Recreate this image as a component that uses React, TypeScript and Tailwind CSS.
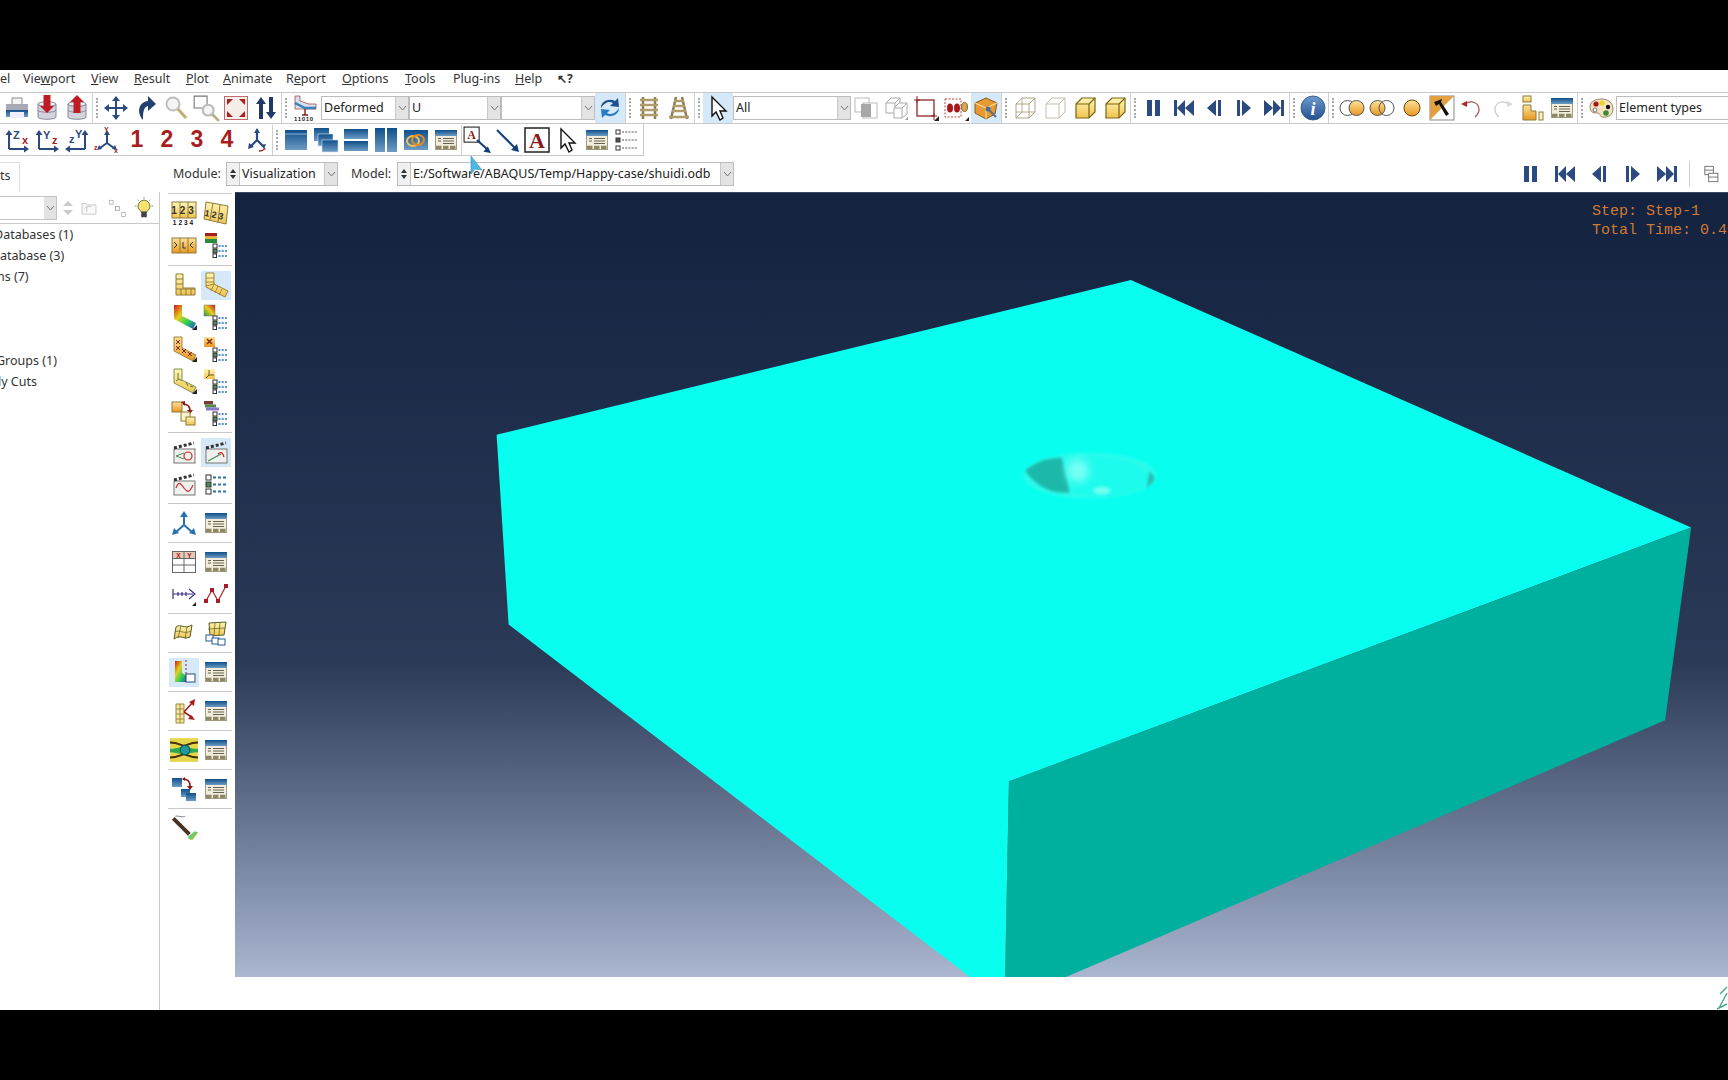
import type { ReactNode } from 'react';

const NAVY = '#2b4a7f';
const RED = '#a31d1d';

function S({ children, s = 26 }: { children: ReactNode; s?: number }) {
  return (
    <svg width={s} height={s} viewBox="0 0 26 26" fill="none">
      {children}
    </svg>
  );
}

function Btn({ children, on }: { children?: ReactNode; on?: boolean }) {
  return (
    <div className={`w-[30px] h-[30px] shrink-0 flex items-center justify-center ${on ? 'bg-[#d6e9f8]' : ''}`}>
      {children}
    </div>
  );
}

function Grip() {
  return (
    <div className="w-[9px] h-[30px] shrink-0 border-l border-[#d2d2d2] flex items-center pl-[3px]">
      <div className="h-[20px] border-l-2 border-dotted border-[#a9a9a9]" />
    </div>
  );
}

function Arrow({ dir = 'down' }: { dir?: string }) {
  return (
    <svg width="9" height="6" viewBox="0 0 9 6" fill="none" className={dir === 'up' ? 'rotate-180' : ''}>
      <path d="M1 1l3.5 4L8 1" stroke="#777" strokeWidth="1" />
    </svg>
  );
}

function Combo({ w, text, spin, plain }: { w: string; text?: string; spin?: boolean; plain?: boolean }) {
  return (
    <div className={`${w} h-[24px] shrink-0 flex items-stretch border border-[#bcbcbc] bg-white`}>
      {spin && (
        <div className="w-[13px] shrink-0 border-r border-[#c4c4c4] bg-[#f0f0f0] flex flex-col items-center justify-center gap-[2px]">
          <div className="w-0 h-0 border-x-[3px] border-x-transparent border-b-[4px] border-b-[#333]" />
          <div className="w-0 h-0 border-x-[3px] border-x-transparent border-t-[4px] border-t-[#333]" />
        </div>
      )}
      <div className="flex-1 px-[2px] text-[12.5px] leading-[21px] text-[#222] whitespace-nowrap overflow-hidden">{text}</div>
      {!plain && (
        <div className="w-[13px] shrink-0 bg-[#e3e3e3] border-l border-[#c8c8c8] flex items-center justify-center">
          <Arrow />
        </div>
      )}
    </div>
  );
}

/* ---- icon drawings ---- */
const Win = () => (
  <S>
    <rect x="2.5" y="3.5" width="21" height="19" fill="#f1ecdd" stroke="#a49d80" />
    <rect x="2" y="3" width="22" height="6" fill="url(#gb)" />
    <path d="M5 11.5h3M5 14h3M10 11.5h11M10 14h11M10 16.5h11" stroke="#66634f" />
    <path d="M3 20.5h20" stroke="#8f8866" strokeWidth="3.5" strokeDasharray="5.5 1.5" />
  </S>
);

const Dots = ({ big }: { big?: boolean }) => (
  <g>
    <rect x={big ? 3 : 10} y={big ? 4 : 12} width={big ? 5 : 4} height={big ? 5 : 4} fill="#fff" stroke="#333" />
    <rect x={big ? 3 : 10} y={big ? 11 : 17} width={big ? 5 : 4} height={big ? 5 : 4} fill="#4f8a4f" stroke="#333" />
    <rect x={big ? 3 : 10} y={big ? 18 : 22} width={big ? 5 : 3.5} height={big ? 5 : 3.5} fill="#fff" stroke="#333" />
    <path
      d={big ? 'M10 6.5h14M10 13.5h14M10 20.5h14' : 'M15.5 14h9M15.5 19h9M15.5 24h9'}
      stroke="#2f6ea5"
      strokeWidth={big ? 2 : 1.5}
      strokeDasharray={big ? '3 2' : '2 1.2'}
    />
  </g>
);

const Triad = ({ a, b, c }: { a: string; b: string; c?: string }) => (
  <S>
    <path d="M5 22V7M5 22h17" stroke={NAVY} strokeWidth="2" />
    <path d="M5 3l3.5 5h-7zM25 22l-5-3.5v7z" fill={NAVY} />
    <text x="9" y="12" fontSize="11" fontWeight="700" fill={c || NAVY} fontFamily="Liberation Sans, sans-serif">{a}</text>
    <text x="18" y="17" fontSize="11" fontWeight="700" fill={RED} fontFamily="Liberation Sans, sans-serif">{b}</text>
  </S>
);

const Num = ({ n }: { n: string }) => (
  <span className="text-[23px] font-bold leading-none text-[#a81e1e] font-['Liberation_Sans',sans-serif]">{n}</span>
);

const Cube = ({ fill, line, wire }: { fill?: boolean; line: string; wire?: boolean }) => (
  <S>
    <path d="M4 9l6-6h13v14l-6 6H4z" fill={fill ? 'url(#gy)' : '#fff'} stroke={line} strokeWidth={fill ? 1.2 : 0.9} />
    <path d="M4 9h13v14M17 9l6-6" stroke={line} strokeWidth={fill ? 1.2 : 0.9} />
    {wire && <path d="M10 3v14H4M10 17h13M10 17l-6 6" stroke={line} strokeWidth="0.8" />}
  </S>
);

const Cyl = ({ up }: { up?: boolean }) => (
  <S>
    <path d="M4 9v13c0 3 18 3 18 0V9z" fill="#d3d3e0" stroke="#8a8a9a" />
    <path d="M4 15c0 3 18 3 18 0M4 9c0 3 18 3 18 0" stroke="#8a8a9a" fill="none" />
    <path d="M4 9c0-3 18-3 18 0s-18 3-18 0z" fill="#eceef4" stroke="#8a8a9a" />
    <path
      d={up ? 'M13 0l7 7h-3.5v11h-7V7H6z' : 'M9.5 0h7v11H20l-7 7-7-7h3.5z'}
      fill="#bd1c22"
    />
  </S>
);

const Bent = ({ fill, stroke = '#8a6a1a' }: { fill: string; stroke?: string }) => (
  <path d="M3 1h8v11l14 7-3 6L3 15z" fill={fill} stroke={stroke} strokeWidth="0.8" />
);

const Clap = ({ children }: { children: ReactNode }) => (
  <S>
    <rect x="3" y="10" width="21" height="14" fill="#eef1ee" stroke="#777" />
    <path d="M3 9l20-5" stroke="#333" strokeWidth="3" strokeDasharray="3 2" />
    {children}
  </S>
);

const PLAY = {
  pause: 'M6 5h5v16H6zM14 5h5v16h-5z',
  first: 'M3 5h3v16H3zM14 5v16L6 13zM23 5v16l-9-8z',
  prev: 'M15 5v16L6 13zM17 5h3v16h-3z',
  next: 'M11 5v16l9-8zM6 5h3v16H6z',
  last: 'M3 5v16l9-8zM12 5v16l8-8zM20 5h3v16h-3z',
};
const Play = ({ d }: { d: string }) => (
  <S>
    <path d={d} fill={NAVY} />
  </S>
);

const ListSmall = ({ children }: { children: ReactNode }) => (
  <S>
    {children}
    <Dots />
  </S>
);

const Venn = ({ mode }: { mode: number }) => (
  <S>
    {mode < 2 && (
      <g>
        <circle cx="8.5" cy="13" r="7.5" fill={mode === 1 ? 'url(#go)' : '#fff'} stroke="#555" />
        <circle cx="17.5" cy="13" r="7.5" fill={mode === 0 ? 'url(#go)' : 'none'} stroke="#555" />
      </g>
    )}
    {mode === 2 && <circle cx="13" cy="13" r="8" fill="url(#go)" stroke="#6b4a14" />}
  </S>
);

function Row1() {
  return (
    <div className="h-[32px] border-y border-[#c9c9c9] bg-white flex items-center pl-[2px]">
      <Btn>
        <S>
          <path d="M8 3h10v7H8z" fill="#f4f4f4" stroke="#8a8a8a" />
          <rect x="2" y="9" width="22" height="8" fill="#a9a9b5" />
          <rect x="2" y="15" width="22" height="7" fill="url(#gb)" />
          <path d="M6 17h14v6H6z" fill="#eef" />
        </S>
      </Btn>
      <Btn><Cyl /></Btn>
      <Btn><Cyl up /></Btn>
      <Grip />
      <Btn>
        <S>
          <path d="M13 1l4 5h-3v6h6V9l5 4-5 4v-3h-6v6h3l-4 5-4-5h3v-6H6v3l-5-4 5-4v3h6V6H9z" fill={NAVY} />
        </S>
      </Btn>
      <Btn>
        <S>
          <path d="M10 25C3 17 6 7 15 6V1l8 8-8 7v-5c-5 1-5 8-5 14z" fill="#23406f" />
        </S>
      </Btn>
      <Btn>
        <S>
          <circle cx="10" cy="9" r="6.5" fill="#f5f5f5" stroke="#bdbdbd" strokeWidth="2" />
          <path d="M15 14l8 9" stroke="#c2ad75" strokeWidth="3" />
        </S>
      </Btn>
      <Btn>
        <S s={28}>
          <path d="M2 2h12v11H2z" fill="#fff" stroke="#777" />
          <circle cx="15" cy="15" r="5" fill="#f5f5f5" stroke="#bbb" strokeWidth="2" />
          <path d="M19 19l6 6" stroke="#b9ab82" strokeWidth="2.5" />
        </S>
      </Btn>
      <Btn>
        <S>
          <rect x="1.5" y="1.5" width="23" height="23" fill="#f6efe9" stroke="#bd6a6a" strokeWidth="1" />
          <path d="M4 4h6L4 10zM22 4v6l-6-6zM4 22v-6l6 6zM22 22h-6l6-6z" fill="#b01f1f" />
        </S>
      </Btn>
      <Btn>
        <S>
          <path d="M8 2l5 7h-3v15H6V9H3zM18 24l-5-7h3V2h4v15h3z" fill="#1f3a68" />
        </S>
      </Btn>
      <Grip />
      <Btn>
        <S>
          <path d="M3 1h5v5l9 3h7v5H3z" fill="#d7e0ee" stroke="#9c3b3b" strokeWidth="0.7" />
          <path d="M3 8l10 5h11" stroke="#3c7fb5" strokeWidth="2.5" />
          <path d="M13 14v6M10 20h6" stroke="#8a1c1c" strokeWidth="1.4" />
          <text x="2" y="26" fontSize="6" fontWeight="700" fill="#222" letterSpacing="0.7" fontFamily="Liberation Sans, sans-serif">11010</text>
        </S>
      </Btn>
      <div className="w-px shrink-0" />
      <Combo w="w-[88px]" text="Deformed" />
      <Combo w="w-[92px]" text="U" />
      <Combo w="w-[94px]" />
      <Btn on>
        <S>
          <path d="M4 13C4 6 12 3 18 6l3-3 1 9-9-1 3-3c-4-2-8-1-12 5z" fill="#1f4f93" />
          <path d="M22 13c0 7-8 10-14 7l-3 3-1-9 9 1-3 3c4 2 8 1 12-5z" fill="#2a7cc0" />
        </S>
      </Btn>
      <Grip />
      <Btn>
        <S>
          <path d="M7 2v22M19 2v22" stroke="#8a7a55" strokeWidth="2.5" />
          <path d="M4 5h18M4 10h18M4 15h18M4 20h18" stroke="#b09b6b" strokeWidth="2.5" />
        </S>
      </Btn>
      <Btn>
        <S>
          <path d="M10 2L5 24M16 2l5 22" stroke="#8a7a55" strokeWidth="2.5" />
          <path d="M8 6h10M7 11h12M6 16h14M3 22h20" stroke="#b09b6b" strokeWidth="2.5" />
        </S>
      </Btn>
      <Grip />
      <Btn on>
        <S>
          <path d="M7 2l14 14h-6l3 7-3 2-4-8-4 4z" fill="#fff" stroke="#111" strokeWidth="1.4" />
        </S>
      </Btn>
      <Combo w="w-[118px]" text="All" />
      <Btn>
        <S>
          <rect x="2" y="3" width="14" height="14" fill="#fff" stroke="#bbb" />
          <rect x="10" y="8" width="14" height="15" fill="#fff" stroke="#bbb" />
          <rect x="8" y="9" width="10" height="13" fill="#a8a8a8" />
        </S>
      </Btn>
      <Btn>
        <S>
          <path d="M3 8l5-5h9l-5 5zM3 8v10h9V8M12 8l5-5v10" stroke="#aaa" fill="#fff" />
          <path d="M11 13l5-5h8v11l-5 4h-8z" fill="#fff" stroke="#aaa" />
          <path d="M11 13h8v10M19 13l5-5" stroke="#aaa" />
          <path d="M25 25h-3l3-3z" fill="#999" />
        </S>
      </Btn>
      <Btn>
        <S>
          <rect x="4" y="5" width="17" height="16" stroke="#8f2525" strokeWidth="1.3" />
          <path d="M4 1v7M1 5h6M21 18v7M18 21h6" stroke="#8f2525" />
          <path d="M26 26h-5l5-5z" fill="#222" />
        </S>
      </Btn>
      <Btn>
        <S>
          <rect x="2" y="4" width="16" height="18" stroke="#b44" strokeDasharray="2 1.5" />
          <ellipse cx="7" cy="13" rx="3" ry="4.5" fill="#a9181c" />
          <ellipse cx="14" cy="13" rx="3" ry="4.5" fill="#a9181c" />
          <ellipse cx="21.5" cy="12" rx="3" ry="4.5" fill="#d8a555" stroke="#8b6b2a" />
          <path d="M26 26h-4l4-4z" fill="#222" />
        </S>
      </Btn>
      <Btn on>
        <S>
          <path d="M13 3l11 5-2 11-9 5-11-6V8z" fill="#e79a33" stroke="#8a5a16" />
          <path d="M2 8l11 5 11-5M13 13v11" stroke="#fde5b0" />
          <path d="M15 14l8 8" stroke="#56728f" strokeWidth="2.2" />
          <circle cx="15" cy="14" r="2.5" fill="#4d6f92" />
        </S>
      </Btn>
      <Grip />
      <Btn><Cube line="#a9987a" wire /></Btn>
      <Btn><Cube line="#bdb6a4" /></Btn>
      <Btn><Cube fill line="#7a6412" /></Btn>
      <Btn><Cube fill line="#7a6412" /></Btn>
      <Grip />
      <Btn><Play d={PLAY.pause} /></Btn>
      <Btn><Play d={PLAY.first} /></Btn>
      <Btn><Play d={PLAY.prev} /></Btn>
      <Btn><Play d={PLAY.next} /></Btn>
      <Btn><Play d={PLAY.last} /></Btn>
      <Grip />
      <Btn>
        <S>
          <circle cx="13" cy="13" r="12" fill="url(#gi)" stroke="#33608f" />
          <text x="13" y="20" fontSize="18" fontWeight="700" fontStyle="italic" textAnchor="middle" fill="#fff" fontFamily="Liberation Serif, serif">i</text>
        </S>
      </Btn>
      <Grip />
      <Btn><Venn mode={0} /></Btn>
      <Btn><Venn mode={1} /></Btn>
      <Btn><Venn mode={2} /></Btn>
      <Btn>
        <S>
          <rect x="1" y="1" width="24" height="24" fill="#fff" stroke="#888" />
          <path d="M1 1h24L1 25z" fill="#e2a043" />
          <path d="M5 7l8-3-1 3 8 12-3 2-7-12-3 2z" fill="#111" />
        </S>
      </Btn>
      <Btn>
        <S>
          <path d="M6 9c6-4 14-2 14 6 0 3-2 5-4 7" stroke="#a55" strokeWidth="1.3" />
          <path d="M2 9l6-3v6z" fill="#b02a2a" />
        </S>
      </Btn>
      <Btn>
        <S>
          <path d="M20 9c-6-4-14-2-14 6 0 3 2 5 4 7" stroke="#ccc" strokeWidth="1.3" />
          <path d="M24 9l-6-3v6z" fill="#d6d6d6" />
        </S>
      </Btn>
      <Btn>
        <S>
          <rect x="4" y="1" width="8" height="6" fill="url(#gy)" stroke="#8d7a3a" />
          <path d="M4 10h8v6h5v9H4z" fill="url(#go)" stroke="#8d7a3a" />
          <rect x="20" y="17" width="4" height="8" fill="#fff3c4" stroke="#8d7a3a" />
        </S>
      </Btn>
      <Btn><Win /></Btn>
      <Grip />
      <Btn>
        <S>
          <path d="M2 12C2 6 8 4 14 4s11 4 11 10-5 9-11 8c-3-1-1-4-5-4s-7-1-7-6z" fill="#f5e3c3" stroke="#9a8460" />
          <circle cx="8" cy="9" r="2.6" fill="#a51616" />
          <circle cx="14" cy="8" r="2.6" fill="#e8d527" />
          <circle cx="20" cy="12" r="2.2" fill="#111" />
          <circle cx="18" cy="18" r="2.8" fill="#3c8a35" />
          <circle cx="7" cy="15" r="2" fill="#fff" stroke="#777" />
        </S>
      </Btn>
      <Combo w="w-[120px]" text="Element types" plain />
    </div>
  );
}

function Row2() {
  const Win2 = (
    <S>
      <rect x="2" y="3" width="22" height="20" fill="url(#gb)" />
      <path d="M2 7h22" stroke="#b5d3ea" strokeWidth="0.7" />
    </S>
  );
  return (
    <div className="h-[32px] w-[644px] border-b border-r border-[#c9c9c9] bg-white flex items-center pl-[2px]">
      <Btn><Triad a="Z" b="x" /></Btn>
      <Btn><Triad a="Y" b="z" /></Btn>
      <Btn>
        <S>
          <path d="M21 22V7M21 22H4" stroke={NAVY} strokeWidth="2" />
          <path d="M21 3l3.5 5h-7zM1 22l5-3.5v7z" fill={NAVY} />
          <text x="5" y="16" fontSize="11" fontWeight="700" fill={NAVY} fontFamily="Liberation Sans, sans-serif">z</text>
          <text x="11" y="11" fontSize="11" fontWeight="700" fill={NAVY} fontFamily="Liberation Sans, sans-serif">Y</text>
        </S>
      </Btn>
      <Btn>
        <S>
          <path d="M13 16V6M13 16l-7 5M13 16l7 5" stroke={NAVY} strokeWidth="2" />
          <path d="M13 3l3 5h-6zM3 23l2-5 3 4zM23 23l-5-1 3-4z" fill={NAVY} />
          <text x="10" y="5" fontSize="7" fontWeight="700" fill={RED} fontFamily="Liberation Sans, sans-serif">Y</text>
          <text x="0" y="23" fontSize="7" fontWeight="700" fill={RED} fontFamily="Liberation Sans, sans-serif">z</text>
          <text x="20" y="26" fontSize="7" fontWeight="700" fill={RED} fontFamily="Liberation Sans, sans-serif">x</text>
        </S>
      </Btn>
      <Btn><Num n="1" /></Btn>
      <Btn><Num n="2" /></Btn>
      <Btn><Num n="3" /></Btn>
      <Btn><Num n="4" /></Btn>
      <Btn>
        <S>
          <path d="M13 13V5M13 13l-6 6M13 13l6 6" stroke={NAVY} strokeWidth="2.2" />
          <path d="M13 1l3 5h-6zM4 22l1-6 5 4zM22 17l-5 1 3 4z" fill={NAVY} />
          <path d="M15 24c3 0 5-1 6-3" stroke="#b02020" strokeWidth="1.5" />
        </S>
      </Btn>
      <Grip />
      <Btn>{Win2}</Btn>
      <Btn>
        <S>
          <rect x="1" y="1" width="15" height="13" fill="url(#gb)" />
          <rect x="5" y="7" width="15" height="12" fill="url(#gb)" stroke="#cfe1ef" strokeWidth="0.6" />
          <rect x="9" y="13" width="16" height="12" fill="url(#gb)" stroke="#cfe1ef" strokeWidth="0.6" />
        </S>
      </Btn>
      <Btn>
        <S>
          <rect x="1" y="2" width="24" height="10" fill="url(#gb)" />
          <rect x="1" y="14" width="24" height="10" fill="url(#gb)" />
        </S>
      </Btn>
      <Btn>
        <S>
          <rect x="2" y="1" width="10" height="24" fill="url(#gb)" />
          <rect x="14" y="1" width="10" height="24" fill="url(#gb)" />
        </S>
      </Btn>
      <Btn>
        <S>
          <rect x="1" y="3" width="24" height="20" fill="url(#gb)" />
          <ellipse cx="10" cy="14" rx="6" ry="5" stroke="#f2c14e" strokeWidth="2" />
          <ellipse cx="15" cy="13" rx="6" ry="5" stroke="#e58a1e" strokeWidth="2" />
        </S>
      </Btn>
      <Btn><Win /></Btn>
      <div className="w-px h-[30px] shrink-0 bg-[#d2d2d2]" />
      <Btn>
        <S s={28}>
          <rect x="1" y="1" width="14" height="14" fill="#fff" stroke="#222" />
          <text x="8" y="12" fontSize="11" fontWeight="700" textAnchor="middle" fill="#8c1a1a" fontFamily="Liberation Serif, serif">A</text>
          <path d="M13 13l10 9" stroke="#123f7a" strokeWidth="2" />
          <path d="M26 25l-7-1 4-5z" fill="#123f7a" />
        </S>
      </Btn>
      <Btn>
        <S>
          <path d="M3 3l18 18" stroke="#123f7a" strokeWidth="2" />
          <path d="M25 25l-8-2 6-6z" fill="#123f7a" />
        </S>
      </Btn>
      <Btn>
        <S>
          <rect x="1" y="1" width="24" height="24" fill="#fff" stroke="#222" strokeWidth="1.5" />
          <text x="13" y="21" fontSize="22" fontWeight="700" textAnchor="middle" fill="#8c1a1a" fontFamily="Liberation Serif, serif">A</text>
        </S>
      </Btn>
      <Btn>
        <S>
          <path d="M7 2l14 14h-6l3 7-3 2-4-8-4 4z" fill="#fff" stroke="#111" strokeWidth="1.4" />
        </S>
      </Btn>
      <Btn><Win /></Btn>
      <Btn>
        <S>
          <rect x="2" y="3" width="4" height="4" fill="#fff" stroke="#333" />
          <rect x="2" y="11" width="4" height="4" fill="#555" stroke="#333" />
          <rect x="2" y="19" width="4" height="4" fill="#fff" stroke="#333" />
          <path d="M8 5h16M8 13h16M8 21h16" stroke="#555" strokeDasharray="2 1.2" />
        </S>
      </Btn>
    </div>
  );
}

function Row3() {
  return (
    <div className="h-[36px] flex items-center text-[12.5px] text-[#333]">
      <div className="w-[20px] h-[30px] self-end shrink-0 border-r border-t border-[#dedede] leading-[26px] whitespace-nowrap">ts</div>
      <span className="ml-[153px] w-[53px] shrink-0 pt-px">Module:</span>
      <Combo w="w-[112px]" text="Visualization" spin />
      <span className="ml-[13px] w-[46px] shrink-0 pt-px">Model:</span>
      <Combo w="w-[337px]" text="E:/Software/ABAQUS/Temp/Happy-case/shuidi.odb" spin />
      <div className="ml-auto flex items-center">
        <div className="w-[34px] flex justify-center"><Play d={PLAY.pause} /></div>
        <div className="w-[34px] flex justify-center"><Play d={PLAY.first} /></div>
        <div className="w-[34px] flex justify-center"><Play d={PLAY.prev} /></div>
        <div className="w-[34px] flex justify-center"><Play d={PLAY.next} /></div>
        <div className="w-[34px] flex justify-center"><Play d={PLAY.last} /></div>
        <div className="ml-[5px] mr-[8px] w-px h-[26px] bg-[#cfcfcf]" />
        <div className="w-[26px] flex justify-center mr-[4px]">
          <S s={20}>
            <rect x="5" y="3" width="11" height="11" fill="#fff" stroke="#555" />
            <path d="M5 8h11" stroke="#555" />
            <rect x="10" y="12" width="12" height="11" fill="#fff" stroke="#555" />
            <path d="M10 17h12" stroke="#555" />
          </S>
        </div>
      </div>
    </div>
  );
}

function TreePanel() {
  return (
    <div className="w-[160px] shrink-0 overflow-hidden border-r border-[#c9c9c9] bg-white">
      <div className="h-[32px] border-b border-[#c9c9c9] flex items-center pr-[3px]">
        <div className="w-[57px] h-[24px] border border-[#c4c4c4] border-l-0 flex justify-end shrink-0">
          <div className="w-[12px] bg-[#e3e3e3] flex items-center justify-center"><Arrow /></div>
        </div>
        <div className="ml-[6px] flex flex-col gap-[4px] shrink-0">
          <div className="w-0 h-0 border-x-[5px] border-x-transparent border-b-[5px] border-b-[#c9c9c9]" />
          <div className="w-0 h-0 border-x-[5px] border-x-transparent border-t-[5px] border-t-[#c9c9c9]" />
        </div>
        <div className="ml-[6px]">
          <S s={20}>
            <path d="M4 7h5l2 2h11v12H4z" fill="#fafafa" stroke="#bbb" />
            <path d="M10 18v-7m0 0l-3 3m3-3h6" stroke="#bbb" />
          </S>
        </div>
        <div className="ml-[8px]">
          <S s={20}>
            <rect x="3" y="3" width="5" height="5" stroke="#aaa" />
            <rect x="11" y="11" width="5" height="5" stroke="#999" />
            <rect x="19" y="19" width="5" height="5" stroke="#aaa" />
          </S>
        </div>
        <div className="ml-auto">
          <S s={24}>
            <circle cx="13" cy="11" r="6.5" fill="#f5e26a" stroke="#6a6a4a" />
            <rect x="10" y="17" width="6" height="6" fill="#444" />
            <path d="M13 1v2M3 11h2M21 11h2M6 4l1.5 1.5M20 4l-1.5 1.5" stroke="#8a8a6a" />
          </S>
        </div>
      </div>
      {/* rows are scrolled sideways, so their first letters are cut by the panel edge */}
      <div className="text-[12.5px] text-[#333]">
        <div className="h-[21px] leading-[21px] whitespace-nowrap -ml-[6px]">Databases (1)</div>
        <div className="h-[21px] leading-[21px] whitespace-nowrap">atabase (3)</div>
        <div className="h-[21px] leading-[21px] whitespace-nowrap -ml-[3px]">ns (7)</div>
        <div className="h-[63px]" />
        <div className="h-[21px] leading-[21px] whitespace-nowrap -ml-[4px]">Groups (1)</div>
        <div className="h-[21px] leading-[21px] whitespace-nowrap -ml-[2px]">ly Cuts</div>
      </div>
    </div>
  );
}

const Cell = ({ children, on }: { children?: ReactNode; on?: boolean }) => (
  <div className="w-[32px] h-[32px] flex items-center justify-center">
    <div className={`w-[30px] h-[29px] flex items-center justify-center ${on ? 'bg-[#d6e9f8]' : ''}`}>{children}</div>
  </div>
);

const Grp = ({ children }: { children: ReactNode }) => (
  <div className="w-[64px] ml-[8px] border-t border-[#c9c9c9] py-[3px] grid grid-cols-2">{children}</div>
);

const txt = 'Liberation Sans, sans-serif';

function ToolBox() {
  return (
    <div className="w-[75px] shrink-0 pt-[1px] bg-white">
      <Grp>
        <Cell>
          <S>
            <rect x="1" y="2" width="24" height="16" fill="url(#gy)" stroke="#8d7a3a" />
            <path d="M9 2v16M17 2v16" stroke="#8d7a3a" />
            <text x="13" y="14" fontSize="10" fontWeight="700" textAnchor="middle" letterSpacing="3" fill="#333" fontFamily={txt}>123</text>
            <text x="13" y="25" fontSize="6.5" fontWeight="700" textAnchor="middle" letterSpacing="2" fill="#111" fontFamily={txt}>1234</text>
          </S>
        </Cell>
        <Cell>
          <S>
            <path d="M3 2l22 4-2 18L1 19z" fill="url(#gy)" stroke="#8d7a3a" />
            <path d="M10 3l-3 17M17 5l-2 17" stroke="#8d7a3a" />
            <text x="12" y="18" fontSize="9" fontWeight="700" textAnchor="middle" letterSpacing="2" fill="#333" fontFamily={txt} transform="rotate(12 12 15)">123</text>
          </S>
        </Cell>
        <Cell>
          <S>
            <rect x="1" y="6" width="24" height="15" fill="url(#go)" stroke="#8d7a3a" />
            <path d="M9 6v15M17 6v15" stroke="#8d7a3a" />
            <path d="M3 10l3 3-3 3M12 10v6h3M22 10l-3 3 3 3" stroke="#333" />
          </S>
        </Cell>
        <Cell>
          <ListSmall>
            <rect x="2" y="1" width="12" height="4" fill="#a51d1d" />
            <rect x="2" y="4" width="12" height="4" fill="#e7b53a" />
            <rect x="2" y="7" width="12" height="4" fill="#2a8a3d" />
          </ListSmall>
        </Cell>
      </Grp>
      <div className="h-px" />
      <Grp>
        <Cell>
          <S>
            <path d="M5 2h7v14h12v7H5z" fill="url(#gy)" stroke="#8d7a3a" />
            <path d="M5 7h7M5 12h7M5 17h19M10 17v6M15 17v6M20 17v6" stroke="#8d7a3a" />
          </S>
        </Cell>
        <Cell on>
          <S>
            <Bent fill="url(#gy)" />
            <path d="M3 6h8M3 10h8M3 14l8-2M11 12l-3 7M15 14l-3 7M19 17l-3 6" stroke="#8a6a1a" strokeWidth="0.7" />
          </S>
        </Cell>
        <Cell>
          <S>
            <Bent fill="url(#gc)" stroke="none" />
            <path d="M26 26h-5l5-5z" fill="#222" />
          </S>
        </Cell>
        <Cell>
          <ListSmall>
            <rect x="1" y="1" width="11" height="11" fill="url(#gc2)" stroke="#777" strokeWidth="0.5" />
          </ListSmall>
        </Cell>
        <Cell>
          <S>
            <Bent fill="url(#go)" />
            <path d="M5 4l4 4M9 4L5 8M5 10l4 4M9 10l-4 4M11 13l4 4M15 13l-4 4M17 16l4 4M21 16l-4 4" stroke="#7b2a10" strokeWidth="1" />
            <path d="M26 26h-5l5-5z" fill="#222" />
          </S>
        </Cell>
        <Cell>
          <ListSmall>
            <rect x="1" y="1" width="11" height="10" fill="url(#go)" />
            <path d="M4 3l5 5M9 3L4 8" stroke="#8a2c0c" strokeWidth="1.6" />
          </ListSmall>
        </Cell>
        <Cell>
          <S>
            <Bent fill="url(#gy)" stroke="#5d7a3a" />
            <path d="M7 5v6M5 13l3-2 3 2M15 14l2 4M19 18l3 1" stroke="#5d7a3a" />
            <path d="M26 26h-5l5-5z" fill="#222" />
          </S>
        </Cell>
        <Cell>
          <ListSmall>
            <rect x="1" y="1" width="11" height="10" fill="url(#gy)" />
            <path d="M6 2v5l-3 3M6 7h5" stroke="#6a5a1a" />
          </ListSmall>
        </Cell>
        <Cell>
          <S>
            <rect x="1" y="2" width="10" height="10" fill="url(#go)" stroke="#8d7a3a" />
            <path d="M12 4c5 0 7 3 7 7" stroke="#8c1a1a" strokeWidth="1.6" />
            <path d="M19 14l-3-4h6zM10 2L14 1v5z" fill="#8c1a1a" />
            <rect x="10" y="12" width="9" height="9" fill="#fff2c4" stroke="#8d7a3a" />
            <rect x="15" y="17" width="9" height="8" fill="url(#gy)" stroke="#8d7a3a" />
          </S>
        </Cell>
        <Cell>
          <ListSmall>
            <rect x="1" y="1" width="9" height="3.5" fill="#7a3a3a" />
            <rect x="2" y="4.5" width="11" height="3" fill="#4f8a4f" />
            <rect x="3" y="7.5" width="13" height="3" fill="#8b79c9" />
          </ListSmall>
        </Cell>
      </Grp>
      <Grp>
        <Cell>
          <Clap>
            <path d="M5 17l8-3M5 17l8 3" stroke="#4a8a5a" />
            <circle cx="17" cy="17" r="4" stroke="#c22" strokeWidth="1.2" />
          </Clap>
        </Cell>
        <Cell on>
          <Clap>
            <path d="M5 22l13-7" stroke="#4a8a5a" strokeWidth="1.3" />
            <path d="M15 15c3-3 5-1 6 3" stroke="#c22" strokeWidth="1.2" />
          </Clap>
        </Cell>
        <Cell>
          <Clap>
            <path d="M5 17c3-8 5-4 8 0s5 6 9-3" stroke="#c33" strokeWidth="1.2" />
          </Clap>
        </Cell>
        <Cell><S><Dots big /></S></Cell>
      </Grp>
      <Grp>
        <Cell>
          <S>
            <path d="M13 15V6M13 15l-8 7M13 15l8 7" stroke="#2872b0" strokeWidth="2" />
            <path d="M13 1l4 6H9zM1 25l2-7 5 5zM25 25l-7-2 5-5z" fill="#2872b0" />
          </S>
        </Cell>
        <Cell><Win /></Cell>
      </Grp>
      <Grp>
        <Cell>
          <S>
            <rect x="1.5" y="2.5" width="23" height="21" fill="#fff" stroke="#666" />
            <rect x="2" y="3" width="22" height="6" fill="#e7c9b8" />
            <path d="M2 9.5h22M2 16h22M13 3v20" stroke="#666" />
            <text x="7.5" y="8.5" fontSize="6.5" fontWeight="700" textAnchor="middle" fill="#a51616" fontFamily={txt}>X</text>
            <text x="18.5" y="8.5" fontSize="6.5" fontWeight="700" textAnchor="middle" fill="#a51616" fontFamily={txt}>Y</text>
          </S>
        </Cell>
        <Cell><Win /></Cell>
        <Cell>
          <S>
            <path d="M2 8v10M2 13h20M7 11v4M11 11v4M15 11v4" stroke="#3a2f8a" strokeWidth="1.2" />
            <path d="M18 8l6 5-6 5" stroke="#3a2f8a" strokeWidth="1.2" />
            <path d="M25 25h-4l4-4z" fill="#222" />
          </S>
        </Cell>
        <Cell>
          <S>
            <path d="M3 20l6-11 6 11 8-15" stroke="#b42a2a" strokeWidth="1.3" />
            <path d="M1 18h4v4H1zM7 7h4v4H7zM13 18h4v4h-4zM21 3h4v4h-4z" fill="#a81c2a" />
          </S>
        </Cell>
      </Grp>
      <Grp>
        <Cell>
          <S>
            <path d="M5 7c5-4 8 3 16-2l-2 12c-6 3-9-3-16 2z" fill="url(#gy)" stroke="#5a5a2a" />
            <path d="M10 6l-3 12M16 7l-2 12M4 12c5-3 9 3 16-1" stroke="#6a6a2a" strokeWidth="0.8" />
          </S>
        </Cell>
        <Cell>
          <S>
            <path d="M6 3l17-1-2 13-14 1z" fill="url(#gy)" stroke="#5a5a2a" />
            <path d="M12 3l-1 13M17 2l-1 13M5 9l17-1" stroke="#6a6a2a" strokeWidth="0.8" />
            <rect x="3" y="15" width="7" height="6" fill="#fff" stroke="#2a5a8f" />
            <rect x="9" y="18" width="7" height="6" fill="#fff" stroke="#2a5a8f" />
            <rect x="15" y="19" width="7" height="6" fill="#fff" stroke="#2a5a8f" />
          </S>
        </Cell>
      </Grp>
      <Grp>
        <Cell on>
          <S>
            <path d="M4 2h7v12l5 3v6H4z" fill="url(#gc)" />
            <path d="M15 1v24" stroke="#a51d1d" strokeDasharray="2 2" />
            <rect x="15" y="15" width="9" height="8" fill="#fff" stroke="#2a4a7f" />
          </S>
        </Cell>
        <Cell><Win /></Cell>
      </Grp>
      <Grp>
        <Cell>
          <S>
            <path d="M5 6h8v19H5zM5 11h8M5 16h8M5 21h8M9 6v19" stroke="#9a8a3a" fill="#f7e7a5" />
            <path d="M13 14l9-10M13 14l9 6" stroke="#a51d1d" strokeWidth="1.6" />
            <path d="M24 1l-1 7-5-4zM24 22l-7-1 3-4z" fill="#a51d1d" />
          </S>
        </Cell>
        <Cell><Win /></Cell>
      </Grp>
      <Grp>
        <Cell>
          <S s={28}>
            <rect x="0" y="2" width="26" height="22" fill="#e6d64a" />
            <path d="M0 6c8 0 10 3 13 3s5-3 13-3M0 20c8 0 10-3 13-3s5 3 13 3" stroke="#4a2d12" strokeWidth="1.8" />
            <path d="M0 12c5 0 5-1 13-2 6 1 8 2 13 2v3c-5 0-7 1-13 2-8-1-8-2-13-2z" fill="#2fa84f" />
            <circle cx="14" cy="13" r="4.5" fill="#1d9a9a" stroke="#0a5a5a" />
          </S>
        </Cell>
        <Cell><Win /></Cell>
      </Grp>
      <Grp>
        <Cell>
          <S>
            <rect x="1" y="2" width="10" height="9" fill="url(#gb)" />
            <path d="M12 3c5 0 7 3 7 7" stroke="#8c1a1a" strokeWidth="1.6" />
            <path d="M19 14l-3-4h6zM11 3l3-2v4z" fill="#8c1a1a" />
            <rect x="10" y="13" width="9" height="8" fill="url(#gb)" />
            <rect x="15" y="17" width="10" height="8" fill="url(#gb)" />
          </S>
        </Cell>
        <Cell><Win /></Cell>
      </Grp>
      <Grp>
        <Cell>
          <S s={28}>
            <path d="M3 4l15 15" stroke="#4a3322" strokeWidth="3.6" />
            <path d="M5 2c4-1 6 2 9 0" stroke="#888" />
            <path d="M17 21l6-5 3 1-5 7-4-1z" fill="#5fd06a" />
            <path d="M19 24l6-6" stroke="#c9b33a" />
          </S>
        </Cell>
        <div />
      </Grp>
      <div className="w-[64px] ml-[8px] border-t border-transparent" />
    </div>
  );
}

function Viewport() {
  return (
    <div className="relative flex-1 h-[785px] overflow-hidden border-t border-[#3a4a63] bg-linear-to-b from-[#12223f] via-[#2b3a57] via-60% to-[#abb6d0]">
      <svg className="block w-full h-full" viewBox="235 192 1493 785">
        <defs>
          <filter id="bl" x="-20%" y="-20%" width="140%" height="140%"><feGaussianBlur stdDeviation="1.6" /></filter>
          <filter id="bl2" x="-30%" y="-30%" width="160%" height="160%"><feGaussianBlur stdDeviation="5" /></filter>
        </defs>
        <polygon points="496,434 1131,279 1692,527 1009,781 1005,977 970,977 508,624" fill="#08fff0" />
        <polygon points="1009,781 1692,527 1666,720 1066,977 1005,977" fill="#00b09f" />
        <ellipse cx="1090" cy="475" rx="66" ry="23" fill="#2cfbeb" filter="url(#bl)" />
        <path d="M1025 470Q1040 457 1062 457L1070 492Q1042 494 1025 470z" fill="#1fb8aa" filter="url(#bl)" />
        <path d="M1068 458Q1125 450 1146 472L1154 478 1145 487Q1110 502 1072 492z" fill="#1dfbec" filter="url(#bl)" />
        <path d="M1150 470L1155 478 1147 488z" fill="#26b6a9" filter="url(#bl)" />
        <ellipse cx="1078" cy="470" rx="11" ry="12" fill="#7bfff5" filter="url(#bl2)" />
        <ellipse cx="1102" cy="490" rx="9" ry="4" fill="#6ffff3" filter="url(#bl)" />
      </svg>
      <div className="absolute left-[1357px] top-[9px] font-['Liberation_Mono',monospace] text-[15px] leading-[19px] text-[#cf7a35] whitespace-pre">
        <div>Step: Step-1   Increment</div>
        <div>Total Time: 0.4000</div>
      </div>
    </div>
  );
}

export default function App() {
  return (
    <div className="relative w-[1728px] h-[1080px] overflow-hidden bg-black flex flex-col font-['Noto_Sans',sans-serif]">
      <svg className="absolute w-0 h-0">
        <defs>
          <linearGradient id="gb" x1="0" y1="0" x2="0" y2="1"><stop offset="0" stopColor="#0f4f8a" /><stop offset="1" stopColor="#6d9cc4" /></linearGradient>
          <linearGradient id="gy" x1="0" y1="0" x2="0" y2="1"><stop offset="0" stopColor="#fff6b4" /><stop offset="1" stopColor="#f0c350" /></linearGradient>
          <linearGradient id="go" x1="0" y1="0" x2="0" y2="1"><stop offset="0" stopColor="#ffe29a" /><stop offset="1" stopColor="#e8971f" /></linearGradient>
          <linearGradient id="gi" x1="0" y1="0" x2="0" y2="1"><stop offset="0" stopColor="#6f9bd0" /><stop offset="1" stopColor="#234f8f" /></linearGradient>
          <linearGradient id="gc" x1="0" y1="0" x2="1" y2="1"><stop offset="0" stopColor="#c81818" /><stop offset="0.35" stopColor="#e8d020" /><stop offset="0.65" stopColor="#30d050" /><stop offset="1" stopColor="#1a50d0" /></linearGradient>
          <linearGradient id="gc2" x1="1" y1="0" x2="0" y2="1"><stop offset="0" stopColor="#c81818" /><stop offset="0.5" stopColor="#e8d020" /><stop offset="1" stopColor="#20903a" /></linearGradient>
        </defs>
      </svg>
      <div className="h-[70px] shrink-0 bg-black" />
      <div className="h-[940px] shrink-0 bg-white flex flex-col">
        <div className="h-[22px] flex text-[12.5px] leading-[18px] text-[#333] whitespace-nowrap">
          <div className="w-[23px]">el</div>
          <div className="w-[68px]">Vie<u>w</u>port</div>
          <div className="w-[43px]"><u>V</u>iew</div>
          <div className="w-[52px]"><u>R</u>esult</div>
          <div className="w-[37px]"><u>P</u>lot</div>
          <div className="w-[63px]"><u>A</u>nimate</div>
          <div className="w-[56px]">R<u>e</u>port</div>
          <div className="w-[63px]"><u>O</u>ptions</div>
          <div className="w-[48px]"><u>T</u>ools</div>
          <div className="w-[62px]">Plu<u>g</u>-ins</div>
          <div className="w-[42px]"><u>H</u>elp</div>
          <div className="font-bold text-[12px]">↖?</div>
        </div>
        <Row1 />
        <Row2 />
        <Row3 />
        <div className="flex h-[818px]">
          <TreePanel />
          <div className="flex-1 flex flex-col min-w-0">
            <div className="flex">
              <ToolBox />
              <Viewport />
            </div>
            <div className="h-[33px] flex justify-end items-end overflow-hidden">
              <svg width="12" height="26" viewBox="0 0 12 26" fill="none">
                <path d="M11 3L4 10M11 9L3 24M11 20L1 25" stroke="#4aa58f" strokeWidth="1.4" />
              </svg>
            </div>
          </div>
        </div>
      </div>
      <div className="flex-1 bg-black" />
      {/* mouse pointer left over the toolbar */}
      <svg className="absolute left-[470px] top-[156px]" width="16" height="20" viewBox="0 0 16 20">
        <path d="M1 0v18l4-5 7 1z" fill="#4fb8e0" stroke="#2f8fb8" strokeWidth="0.6" />
      </svg>
    </div>
  );
}
